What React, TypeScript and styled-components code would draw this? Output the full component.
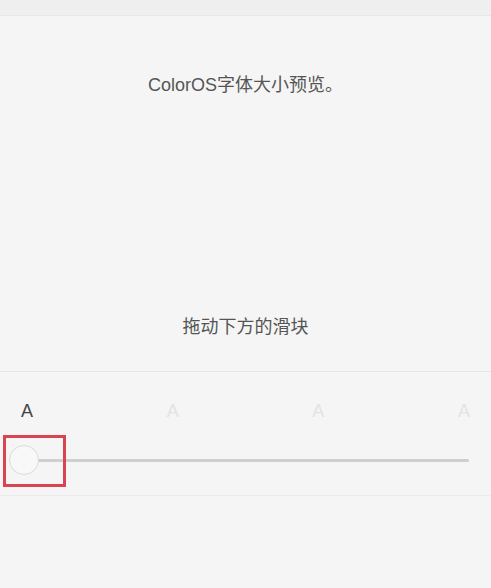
import styled, { createGlobalStyle } from "styled-components";

const GlobalStyle = createGlobalStyle`
  html, body {
    margin: 0;
    padding: 0;
    background: #f5f5f5;
  }
  body {
    font-family: "Liberation Sans", "Noto Sans CJK SC", sans-serif;
  }
`

const Page = styled.div`
  min-height: 588px;
  background: #f5f5f5;
`

const StatusBar = styled.div`
  height: 15px;
  background: #efefef;
  border-bottom: 1px solid #e8e8e8;
`

const Preview = styled.section`
  height: 356px;
  padding: 56px 0 31px;
  box-sizing: border-box;
  display: flex;
  flex-direction: column;
  justify-content: space-between;
  border-bottom: 1px solid #e7e7e7;
`

const Line = styled.p`
  margin: 0;
  font-size: 18px;
  line-height: 26px;
  color: #555;
  text-align: center;
`

const SizePanel = styled.section`
  padding: 29px 0 20px;
  border-bottom: 1px solid #ebebeb;
`

const Labels = styled.div`
  display: flex;
  justify-content: space-between;
  padding: 0 21px;
`

const Label = styled.span<{ $active?: boolean }>`
  font-size: 18px;
  line-height: 20px;
  color: ${(p) => (p.$active ? "#444" : "#e3e3e3")};
`

const SliderRow = styled.div`
  position: relative;
  height: 30px;
  margin-top: 24px;
  padding: 0 22px 0 10px;
  display: flex;
  align-items: center;
`

const Track = styled.div`
  flex: 1;
  height: 3px;
  background: #cfcfcf;
  border-radius: 2px;
`

const Thumb = styled.div`
  position: absolute;
  left: 9px;
  top: 0;
  width: 30px;
  height: 30px;
  box-sizing: border-box;
  border-radius: 50%;
  background: #f8f8f8;
  border: 1px solid #dadada;
`

const Highlight = styled.div`
  position: absolute;
  left: 3px;
  top: -10px;
  width: 63px;
  height: 52px;
  box-sizing: border-box;
  border: 3px solid #d8444f;
`

function App() {
  return (
    <Page>
      <GlobalStyle />
      <StatusBar />
      <Preview>
        <Line>ColorOS字体大小预览。</Line>
        <Line>拖动下方的滑块</Line>
      </Preview>
      <SizePanel>
        <Labels>
          <Label $active>A</Label>
          <Label>A</Label>
          <Label>A</Label>
          <Label>A</Label>
        </Labels>
        <SliderRow>
          <Track />
          <Thumb />
          <Highlight />
        </SliderRow>
      </SizePanel>
    </Page>
  )
}

export default App;
